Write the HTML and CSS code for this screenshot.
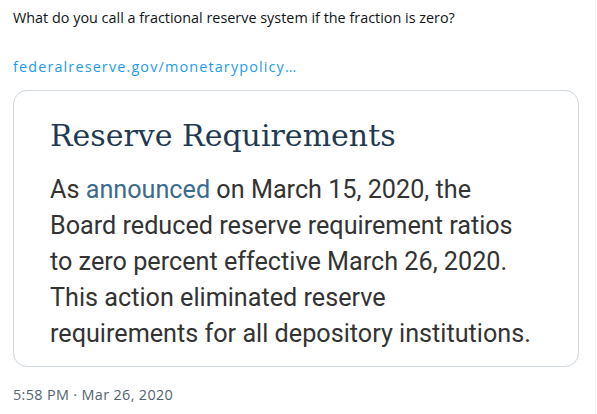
FILE: index.html
```html
<!DOCTYPE html>
<html>
<head>
<meta charset="utf-8">
<link rel="stylesheet" href="styles.css">
</head>
<body>
<div class="page">
  <div class="tweet">
    <p class="tweet-text">What do you call a fractional reserve system if the fraction is zero?</p>
    <a class="tweet-link" href="#">federalreserve.gov/monetarypolicy…</a>
    <div class="card">
      <h1 class="card-title">Reserve Requirements</h1>
      <p class="card-body">As <span class="card-link">announced</span> on March 15, 2020, the<br>Board reduced reserve requirement ratios<br>to zero percent effective March 26, 2020.<br>This action eliminated reserve<br>requirements for all depository institutions.</p>
    </div>
    <div class="meta">5:58 PM · Mar 26, 2020</div>
  </div>
</div>
</body>
</html>
```
FILE: styles.css
```css
html, body {
  margin: 0;
  padding: 0;
  background: #ffffff;
}
.page {
  width: 596px;
  height: 414px;
  border-right: 1px solid #eff3f4;
  box-sizing: border-box;
  overflow: hidden;
}
.tweet {
  padding: 8px 0 0 13px;
  display: flex;
  flex-direction: column;
  align-items: flex-start;
  font-family: "Open Sans", "Noto Sans", sans-serif;
}
.tweet-text {
  margin: 0;
  font-size: 14.4px;
  line-height: 20px;
  color: #0f1419;
}
.tweet-link {
  margin-top: 29px;
  font-size: 14.4px;
  line-height: 20px;
  letter-spacing: 1.15px;
  color: #1d9bf0;
  text-decoration: none;
}
.card {
  margin-top: 13px;
  width: 566px;
  height: 277px;
  box-sizing: border-box;
  border: 1px solid #cfd9de;
  border-radius: 14px;
  padding: 25px 10px 0 36px;
}
.card-title {
  margin: 0;
  font-family: "DejaVu Serif", serif;
  font-weight: normal;
  font-size: 30px;
  line-height: 40px;
  color: #1f3a52;
  white-space: nowrap;
}
.card-body {
  margin: 16px 0 0 0;
  font-family: Roboto, sans-serif;
  font-size: 25.2px;
  line-height: 36px;
  color: #333333;
  white-space: nowrap;
}
.card-link {
  color: #3b6c8c;
}
.meta {
  margin-top: 18px;
  font-size: 14.4px;
  line-height: 20px;
  letter-spacing: 0.35px;
  color: #536471;
}
```
